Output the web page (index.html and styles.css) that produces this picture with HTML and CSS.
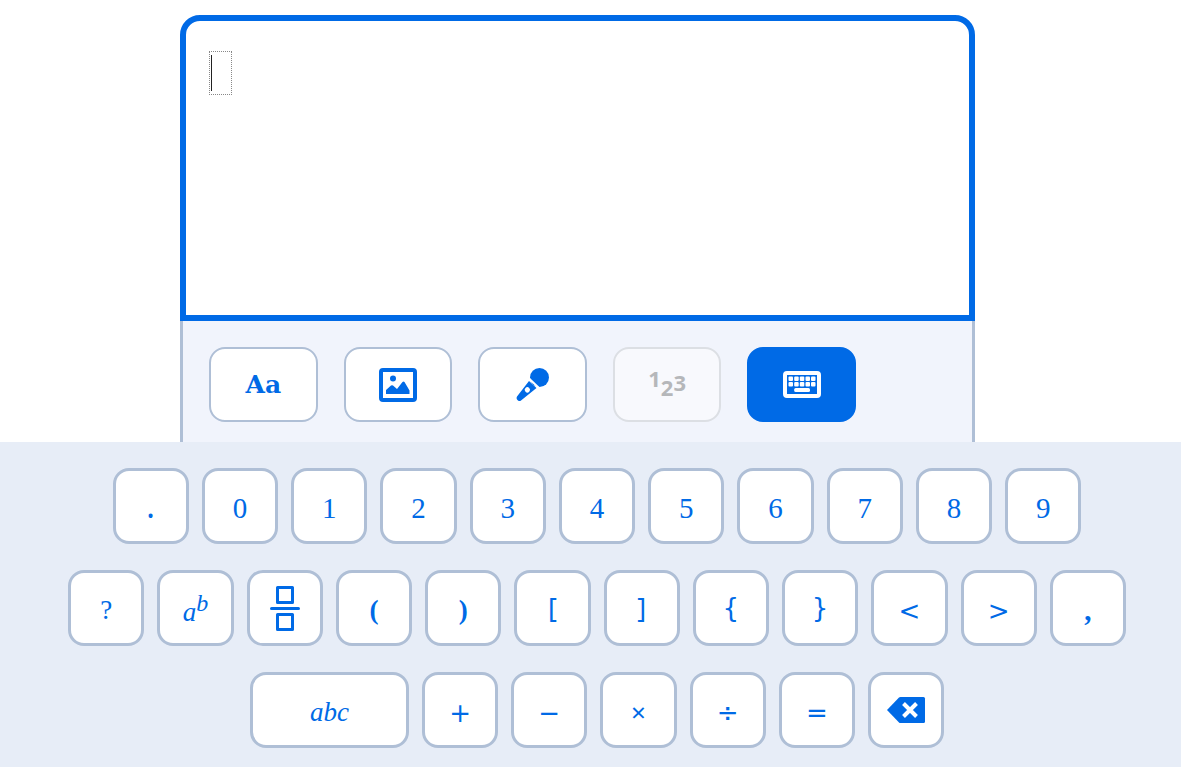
FILE: index.html
```html
<!DOCTYPE html>
<html lang="en">
<head>
<meta charset="utf-8">
<meta name="viewport" content="width=device-width, initial-scale=1">
<title>Math editor</title>
<link rel="stylesheet" href="styles.css">
</head>
<body>
<main class="composer">
  <section class="editor">
    <div class="slot"><span class="caret"></span><input class="slot-input" type="text" aria-label="Answer"></div>
  </section>
  <div class="toolbar">
    <div class="tools">
      <button class="tool tool-text" type="button" aria-label="Text">Aa</button>
      <button class="tool" type="button" aria-label="Image">
        <svg width="40" height="36" viewBox="0 0 40 36"><rect x="3" y="3" width="34" height="30" rx="2" fill="none" stroke="currentColor" stroke-width="4"/><circle cx="15" cy="11.500" r="3" fill="currentColor"/><path d="M8 27v-4l5-4.500q1-.7 2 0l4 3.500 5.500-7q1-1 2 0l5 8.500V27z" fill="currentColor"/></svg>
      </button>
      <button class="tool" type="button" aria-label="Microphone">
        <svg width="36" height="36" viewBox="0 0 36 36" fill="currentColor"><circle cx="25.500" cy="10.500" r="9.500"/><path fill-rule="evenodd" d="M15 14l7.500 7-15.500 12.500q-1.500 1-3 0l-1-1q-1-1.500 0-3zm-3.500 7a2.600 2.600 0 1 0 3.700 3.700 2.600 2.600 0 0 0-3.700-3.700z"/><path d="M15 11.500l10 9.500" stroke="#fff" stroke-width="2"/></svg>
      </button>
      <button class="tool tool-numbers" type="button" aria-label="Numbers" disabled><span class="num">1</span><span class="num num-low">2</span><span class="num num-mid">3</span></button>
      <button class="tool tool-active" type="button" aria-label="Keyboard" aria-pressed="true">
        <svg width="38" height="27" viewBox="0 0 38 27"><rect x="2" y="2" width="34" height="23" rx="2" fill="none" stroke="currentColor" stroke-width="4"/><g fill="currentColor"><rect x="5.500" y="5.500" width="4.500" height="4.500" rx="1"/><rect x="11.200" y="5.500" width="4.500" height="4.500" rx="1"/><rect x="16.800" y="5.500" width="4.500" height="4.500" rx="1"/><rect x="22.500" y="5.500" width="4.500" height="4.500" rx="1"/><rect x="28" y="5.500" width="4.500" height="4.500" rx="1"/><rect x="5.500" y="11" width="4.500" height="4.500" rx="1"/><rect x="11.200" y="11" width="4.500" height="4.500" rx="1"/><rect x="16.800" y="11" width="4.500" height="4.500" rx="1"/><rect x="22.500" y="11" width="4.500" height="4.500" rx="1"/><rect x="28" y="11" width="4.500" height="4.500" rx="1"/><rect x="11.200" y="17" width="15.800" height="4" rx="1.500"/></g></svg>
      </button>
    </div>
  </div>
</main>
<section class="keyboard" aria-label="Math keyboard">
  <div class="keys keys-digits">
    <button class="key dot" type="button">.</button>
    <button class="key" type="button">0</button>
    <button class="key" type="button">1</button>
    <button class="key" type="button">2</button>
    <button class="key" type="button">3</button>
    <button class="key" type="button">4</button>
    <button class="key" type="button">5</button>
    <button class="key" type="button">6</button>
    <button class="key" type="button">7</button>
    <button class="key" type="button">8</button>
    <button class="key" type="button">9</button>
  </div>
  <div class="keys keys-symbols">
    <button class="key mark" type="button">?</button>
    <button class="key letters power" type="button"><span>a<sup>b</sup></span></button>
    <button class="key" type="button" aria-label="Fraction">
      <svg width="30" height="46" viewBox="0 0 30 46" fill="none" stroke="currentColor" stroke-width="3" stroke-linejoin="round"><rect x="7.500" y="2.500" width="15" height="15"/><path d="M1.500 23.500h27" stroke-linecap="round"/><rect x="7.500" y="29.500" width="15" height="15"/></svg>
    </button>
    <button class="key paren" type="button">(</button>
    <button class="key paren" type="button">)</button>
    <button class="key bracket" type="button">[</button>
    <button class="key bracket" type="button">]</button>
    <button class="key brace" type="button">{</button>
    <button class="key brace" type="button">}</button>
    <button class="key operator" type="button">&lt;</button>
    <button class="key operator" type="button">&gt;</button>
    <button class="key comma" type="button">,</button>
  </div>
  <div class="keys keys-operators">
    <button class="key key-wide letters" type="button">abc</button>
    <button class="key operator" type="button">+</button>
    <button class="key operator" type="button">−</button>
    <button class="key times" type="button">×</button>
    <button class="key operator" type="button">÷</button>
    <button class="key operator" type="button">=</button>
    <button class="key" type="button" aria-label="Delete">
      <svg width="40" height="28" viewBox="0 0 40 28"><path d="M1 14L13 1.500Q13.500 1 14.500 1H37.500Q39 1 39 2.500V25.500Q39 27 37.500 27H14.500Q13.500 27 13 26.500z" fill="currentColor"/><path d="M17.500 7.500l13 13M30.500 7.500l-13 13" stroke="#fff" stroke-width="4"/></svg>
    </button>
  </div>
</section>
</body>
</html>
```

FILE: styles.css
```css
:root {
  --blue: #006ae6;
  --line: #afbfd6;
}

* {
  box-sizing: border-box;
}

body {
  margin: 0;
  min-height: 100vh;
  display: flex;
  flex-direction: column;
  background: #fff;
  color: var(--blue);
  font-family: "Liberation Serif", serif;
}

button {
  font: inherit;
  color: inherit;
  padding: 0;
  display: flex;
  align-items: center;
  justify-content: center;
  background: #fff;
  border-style: solid;
  border-color: var(--line);
  border-radius: 16px;
}

svg {
  display: block;
}

.composer {
  width: calc(100% - 26px);
  padding-top: 15px;
}

.editor,
.toolbar {
  width: 100%;
  max-width: 795px;
  margin: 0 auto;
}

.editor {
  min-height: 306px;
  padding: 30px 23px;
  border: 6px solid var(--blue);
  border-radius: 20px 20px 0 0;
}

.slot {
  width: 23px;
  height: 44px;
  padding: 3px 1px;
  display: flex;
  border: 1px dotted #888;
}

.caret {
  width: 1px;
  background: #222;
}

.slot-input {
  flex: 1;
  min-width: 0;
  padding: 0;
  border: 0;
  outline: 0;
  background: transparent;
  font: 28px "Liberation Serif", serif;
}

.toolbar {
  padding: 26px 26px 20px;
  border: solid var(--line);
  border-width: 0 3px;
  background: #f1f4fc;
}

.tools {
  display: grid;
  grid-template-columns: repeat(5, 1fr);
  gap: 26px;
  max-width: 647px;
}

.tool {
  height: 75px;
  border-width: 2px;
}

.tool-text {
  font: bold 25px "DejaVu Serif", serif;
}

.tool-numbers {
  color: #b5b7ba;
  background: #f8f9fd;
  border-color: #dcdfe4;
  font: bold 22px/24px "Open Sans", sans-serif;
}

.num {
  padding-bottom: 14px;
}

.num-low {
  padding: 4px 0 0;
}

.num-mid {
  padding: 0 0 6px;
}

.tool-active {
  color: #fff;
  background: var(--blue);
  border-color: var(--blue);
}

.keyboard {
  flex: 1;
  display: flex;
  flex-direction: column;
  align-items: center;
  gap: 26px;
  padding: 26px 0 19px 13px;
  background: #e7edf7;
}

.keys {
  width: 100%;
  display: flex;
  gap: 13px;
}

.keys-digits {
  max-width: 969px;
}

.keys-symbols {
  max-width: 1058px;
}

.keys-operators {
  max-width: 694px;
}

.key {
  flex: 1 1 0;
  min-width: 0;
  height: 76px;
  padding-top: 4px;
  border-width: 3px;
  font-size: 29px;
  line-height: 32px;
}

.key:has(svg) {
  padding: 0;
}

.key-wide {
  flex: 0 1 159px;
}

.mark {
  font-size: 27px;
}

.letters {
  font-size: 27px;
  font-style: italic;
}

.power {
  padding-top: 8px;
}

.power sup {
  font-size: 24px;
  line-height: 0;
  vertical-align: 10px;
}

.paren {
  font-weight: bold;
  font-size: 27px;
}

.bracket {
  font-family: "Noto Sans", sans-serif;
  font-size: 27px;
  padding-top: 0;
}

.brace {
  font-family: "DejaVu Sans", sans-serif;
  font-size: 26px;
  padding-top: 0;
}

.operator {
  font-family: "DejaVu Sans", sans-serif;
  font-size: 26px;
  padding-top: 6px;
}

.times {
  font-family: "Noto Sans", sans-serif;
  font-size: 26px;
}

.dot {
  font-family: "Noto Sans", sans-serif;
  font-size: 32px;
  padding-top: 0;
}

.comma {
  font-weight: bold;
}
```
